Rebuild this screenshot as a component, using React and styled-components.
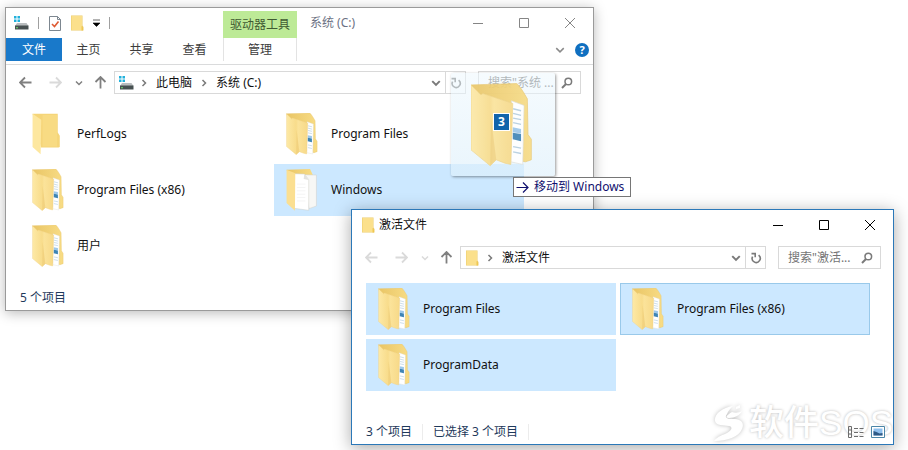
import React, { useState } from 'react'
import styled, { createGlobalStyle } from 'styled-components'

const GlobalStyle = createGlobalStyle`
	* {
		box-sizing: border-box;
	}
	body {
		margin: 0;
		background: #fff;
	}
	body, button, input {
		font-family: 'Noto Sans', 'Noto Sans CJK SC', sans-serif;
		font-size: 12px;
		line-height: 16px;
	}
	button {
		padding: 0;
		border: 0;
		background: none;
		color: inherit;
	}
	svg {
		display: block;
		flex: none;
	}
`
const Desktop = styled.main`
	position: relative;
	min-height: 100vh;
	overflow: hidden;
`
const Window = styled.section`
	position: absolute;
	display: flex;
	flex-direction: column;
	background: #fff;
	border: 1px solid ${({ $active }) => ($active ? '#2b78b8' : '#9a9a9a')};
	box-shadow: ${({ $active }) => ($active ? '0 3px 16px rgba(0,0,0,.34)' : '0 2px 12px rgba(0,0,0,.28)')};
`
const SystemWindow = styled(Window)`
	top: 7px;
	left: 5px;
	right: 314px;
`
const ActivationWindow = styled(Window)`
	top: 209px;
	left: 351px;
	right: 14px;
`
const TitleBar = styled.header`
	display: flex;
	align-items: center;
	height: 30px;
`
const QuickAccess = styled.div`
	display: flex;
	align-items: center;
	gap: 9px;
	width: 217px;
	padding-left: 7px;
`
const Divider = styled.span`
	width: 1px;
	height: 12px;
	background: #a0a0a0;
`
const ToolGroup = styled.span`
	align-self: flex-end;
	width: 74px;
	height: 27px;
	line-height: 27px;
	text-align: center;
	color: #3f5a32;
	background: #bdea97;
`
const Title = styled.h1`
	flex: 1;
	margin: 0;
	padding-left: ${({ $indent }) => $indent || 4}px;
	font-size: 12px;
	font-weight: 400;
	color: ${({ $muted }) => ($muted ? '#6b7183' : '#111')};
`
const TitleIcon = styled.span`
	padding-left: 10px;
`
const Controls = styled.div`
	display: flex;
	height: 100%;
	color: ${({ $muted }) => ($muted ? '#858585' : '#000')};
`
const ControlButton = styled.button`
	display: flex;
	align-items: center;
	justify-content: center;
	width: 46px;
`
const Ribbon = styled.nav`
	display: flex;
	align-items: center;
	height: 27px;
	padding-bottom: 3px;
	border-bottom: 1px solid #dadbdc;
`
const Tab = styled.button`
	width: 53px;
	height: 23px;
	color: #3c3c3c;
`
const FileTab = styled(Tab)`
	width: 56px;
	color: #fff;
	background: #1979ca;
`
const ToolTab = styled(Tab)`
	width: 74px;
	margin-left: 2px;
	border: solid #e3e3e3;
	border-width: 0 1px;
`
const RibbonEnd = styled.div`
	display: flex;
	align-items: center;
	gap: 10px;
	margin-left: auto;
	padding-right: 4px;
	color: #8a8a8a;
`
const HelpButton = styled.button`
	width: 14px;
	height: 14px;
	border-radius: 50%;
	background: #0f6fc0;
	color: #fff;
	font-weight: 700;
	font-size: 11px;
	line-height: 14px;
`
const NavBar = styled.div`
	display: flex;
	padding: 6px 12px 0 4px;
`
const NavButton = styled.button`
	display: flex;
	align-items: center;
	justify-content: center;
	width: ${({ $width }) => $width || 30}px;
	color: ${({ disabled }) => (disabled ? '#dadada' : '#808080')};
`
const Address = styled.div`
	display: flex;
	flex: 1;
	align-items: center;
	height: 23px;
	border: 1px solid #d9d9d9;
	color: #7a7a7a;
`
const AddressIcon = styled.span`
	display: flex;
	justify-content: center;
	width: 22px;
`
const CrumbArrow = styled.span`
	display: flex;
	justify-content: center;
	width: 14px;
`
const Crumb = styled.a`
	padding: 0 5px;
	color: #111;
	text-decoration: none;
`
const HistoryButton = styled.button`
	display: flex;
	align-items: center;
	justify-content: center;
	width: 18px;
	height: 100%;
	margin-left: auto;
`
const RefreshButton = styled.button`
	display: flex;
	align-items: center;
	justify-content: center;
	width: 20px;
	height: 100%;
	border-left: 1px solid #d9d9d9;
`
const Search = styled.label`
	display: flex;
	align-items: center;
	width: 103px;
	height: 23px;
	margin-left: 12px;
	padding: 0 7px 0 9px;
	border: 1px solid #d9d9d9;
	color: #7a7a7a;
`
const SearchInput = styled.input`
	flex: 1;
	min-width: 0;
	padding: 0;
	border: 0;
	outline: 0;
	background: none;
	&::placeholder {
		color: #757575;
		opacity: 1;
	}
`
const FileGrid = styled.ul`
	display: grid;
	grid-template-columns: repeat(auto-fill, 250px);
	gap: 4px;
	margin: 0;
	padding: 14px 14px ${({ $space }) => $space}px;
	list-style: none;
`
const FileItem = styled.button`
	display: flex;
	align-items: center;
	gap: 13px;
	width: 100%;
	height: 52px;
	padding-left: ${({ $focused }) => ($focused ? 11 : 12)}px;
	text-align: left;
	color: #111;
	background: ${({ $selected }) => ($selected ? '#cce8ff' : 'none')};
	border: ${({ $focused }) => ($focused ? '1px solid #99c9ea' : '0')};
`
const FileName = styled.span`
	font-size: 12px;
`
const StatusBar = styled.footer`
	display: flex;
	align-items: center;
	height: 24px;
	padding: 0 8px 0 14px;
	color: #1e395b;
`
const StatusText = styled.span`
	margin-right: 10px;
	padding-right: 10px;
	border-right: 1px solid ${({ $divided }) => ($divided ? '#ececec' : 'transparent')};
`
const ViewButtons = styled.div`
	position: relative;
	z-index: 1;
	display: flex;
	gap: 7px;
	margin-left: auto;
`
const DragGhost = styled.div`
	position: absolute;
	top: 73px;
	left: 451px;
	display: flex;
	align-items: center;
	justify-content: center;
	width: 104px;
	height: 103px;
	padding-right: 4px;
	border-radius: 2px;
	background: linear-gradient(rgba(236, 247, 253, .5), rgba(222, 240, 251, .65));
	box-shadow: 1px 1px 3px rgba(0, 0, 0, .4);
`
const GhostFolder = styled.div`
	opacity: .9;
`
const DragCount = styled.span`
	position: absolute;
	top: 40px;
	left: 42px;
	width: 17px;
	height: 18px;
	border: 1px solid #fff;
	background: #1264ab;
	color: #fff;
	font-weight: 700;
	line-height: 16px;
	text-align: center;
`
const DropTip = styled.div`
	position: absolute;
	top: 177px;
	left: 513px;
	display: flex;
	align-items: center;
	gap: 5px;
	height: 20px;
	padding: 0 6px 0 2px;
	border: 1px solid #767676;
	background: #fff;
	color: #10106e;
	white-space: nowrap;
`
const Watermark = styled.div`
	position: absolute;
	right: 0;
	bottom: 2px;
	display: flex;
	align-items: center;
	gap: 4px;
	height: 38px;
	color: #fff;
	font-family: 'Liberation Sans', 'Noto Sans CJK SC', sans-serif;
	font-size: 35px;
	font-weight: 500;
	line-height: 38px;
	text-shadow: 0 0 3px rgba(0, 0, 0, .28);
	svg {
		filter: drop-shadow(0 0 2px rgba(0, 0, 0, .25));
	}
`

const Chevron = ({ size = 8, d = 'M1 2.5l3 3 3-3', weight = 1.5 }) => (
	<svg width={size} height={size} viewBox="0 0 8 8" fill="none" stroke="currentColor" strokeWidth={weight}>
		<path d={d} />
	</svg>
)

const Arrow = ({ turn = 0, weight = 1.8 }) => (
	<svg width="13" height="13" viewBox="0 0 13 13" fill="none" stroke="currentColor" strokeWidth={weight}>
		<path d="M12.5 6.5h-11M6 1.5l-5 5 5 5" transform={`rotate(${turn} 6.5 6.5)`} />
	</svg>
)

const DriveIcon = () => (
	<svg width="16" height="16" viewBox="0 0 16 16">
		<path d="M1 1h2.500v2.500H1zM4.500 1H7v2.500H4.500zM1 4.500h2.500V7H1zM4.500 4.500H7V7H4.500z" fill="#22b1dc" />
		<path d="M4 8h9.500l2 3H2z" fill="#b9bdbf" />
		<path d="M2 10.500h13.500v4H2z" fill="#475051" />
		<path d="M3 12.300h2v1H3z" fill="#6fe06f" />
	</svg>
)

const SmallFolder = () => (
	<svg width="13" height="16" viewBox="0 0 13 16">
		<path d="M0 .5h11.500v10l1 1.500v3.500H0z" fill="#eccb6a" />
		<path d="M.5 1h10.500v14H.5z" fill="#fbe08c" />
		<path d="M10.500 11l1.500 1.500v3h-1.500z" fill="#efc750" />
	</svg>
)

const CheckPage = () => (
	<svg width="14" height="17" viewBox="0 0 14 17" fill="none">
		<path d="M1.500 1.500h8l3 3v11h-11z" fill="#fff" stroke="#7d8790" />
		<path d="M9.500 1.500v3h3" stroke="#7d8790" />
		<path d="M4 9l2.500 2.500 4-5" stroke="#de5a32" strokeWidth="1.600" />
	</svg>
)

const RefreshIcon = () => (
	<svg width="12" height="12" viewBox="0 0 12 12" fill="none" stroke="currentColor" strokeWidth="1.600">
		<path d="M8.600 3.200A4 4 0 1 1 2.600 4.600" />
		<path d="M1.500 1.600h3.700v3.700" />
	</svg>
)

const SearchIcon = () => (
	<svg width="12" height="12" viewBox="0 0 12 12" fill="none" stroke="currentColor">
		<circle cx="7.300" cy="4.500" r="3.300" strokeWidth="1.500" />
		<path d="M5 7L1 11" strokeWidth="2" />
	</svg>
)

const FolderIcon = ({ kind = 'full', width = 32, height = 42 }) => (
	<svg width={width} height={height} viewBox="0 0 184 250">
		<defs>
			<linearGradient id="cover" x1="0" x2="1">
				<stop offset="0" stopColor="#fde9a6" />
				<stop offset=".45" stopColor="#f8dc8b" />
				<stop offset=".55" stopColor="#fbe39a" />
				<stop offset="1" stopColor="#f7d988" />
			</linearGradient>
			<linearGradient id="back" x1="0" x2="1">
				<stop offset="0" stopColor="#e9c565" />
				<stop offset="1" stopColor="#f8dc85" />
			</linearGradient>
		</defs>
		{kind === 'empty' && (
			<>
				<path d="M0 4h150v112l12 20v66l-8 4H50z" fill="#f5d579" />
				<path d="M60 12h86v188H60z" fill="#f8db83" />
				<path d="M0 4l52 36-4 206L0 202z" fill="#fde79f" />
			</>
		)}
		{kind === 'full' && (
			<>
				<path d="M0 4L138 0q8 4 32 46l2 108 10 14v62l-18 6-100-20z" fill="url(#back)" stroke="#e6c267" strokeWidth="2" />
				<path d="M122 52l38 14-4 178-36-8z" fill="#fff" stroke="#dcdcd4" strokeWidth="2" />
				<path d="M127 76l24 6M127 90l24 6M127 104l24 5M127 118l24 5M127 190l24 5M127 206l24 5" stroke="#b5cedf" strokeWidth="4" />
				<path d="M126 132l25 5v14l-25-4z" fill="#9cc7ea" />
				<path d="M126 148l25 4v22l-25-6z" fill="#3e84b5" />
				<path d="M0 4l30 30 6-4 90 30-6 184-18-4-26-10-18 18L0 200z" fill="url(#cover)" stroke="#efd080" strokeWidth="2" />
				<path d="M60 100l-2 146 18-16z" fill="#eac469" opacity=".5" />
			</>
		)}
		{kind === 'pages' && (
			<>
				<path d="M0 4L140 0l16 34v60L50 120z" fill="url(#back)" />
				<path d="M90 34l88 2v184l-44 16z" fill="#f7f7f5" stroke="#cfcfca" strokeWidth="3" />
				<path d="M44 28l62 2 26 34v182l-88-12z" fill="#fff" stroke="#cfcfca" strokeWidth="3" />
				<path d="M106 30l-4 30 30 6z" fill="#e3e3e0" />
				<path d="M62 90h50M62 110h50M62 130h50M62 150h50M62 170h50M62 190h50" stroke="#eee" strokeWidth="4" />
				<path d="M0 4l52 22-2 222L0 202z" fill="#fbdf91" />
			</>
		)}
	</svg>
)

const WindowControls = ({ muted }) => (
	<Controls $muted={muted}>
		<ControlButton aria-label="最小化">
			<svg width="10" height="10" stroke="currentColor"><path d="M0 5.500h10" /></svg>
		</ControlButton>
		<ControlButton aria-label="最大化">
			<svg width="10" height="10" fill="none" stroke="currentColor"><path d="M.5.500h9v9h-9z" /></svg>
		</ControlButton>
		<ControlButton aria-label="关闭">
			<svg width="10" height="10" stroke="currentColor"><path d="M0 0l10 10M10 0L0 10" /></svg>
		</ControlButton>
	</Controls>
)

const Navigation = ({ icon, path, placeholder, canGoBack }) => (
	<NavBar>
		<NavButton aria-label="后退" disabled={!canGoBack}><Arrow /></NavButton>
		<NavButton aria-label="前进" disabled><Arrow turn={180} /></NavButton>
		<NavButton aria-label="最近" $width={17} disabled={!canGoBack}><Chevron /></NavButton>
		<NavButton aria-label="向上" $width={27}><Arrow turn={90} /></NavButton>
		<Address>
			<AddressIcon>{icon}</AddressIcon>
			{path.map(part => (
				<React.Fragment key={part}>
					<CrumbArrow><Chevron d="M2.500 1l3 3-3 3" /></CrumbArrow>
					<Crumb href="#">{part}</Crumb>
				</React.Fragment>
			))}
			<HistoryButton aria-label="历史"><Chevron size={10} weight={1.6} /></HistoryButton>
			<RefreshButton aria-label="刷新"><RefreshIcon /></RefreshButton>
		</Address>
		<Search>
			<SearchInput type="text" aria-label="搜索" placeholder={placeholder} />
			<SearchIcon />
		</Search>
	</NavBar>
)

const Files = ({ files, initial, focused, space }) => {
	const [selected, setSelected] = useState(initial)

	const toggle = (name) => {
		setSelected(selected.includes(name) ? selected.filter(item => item !== name) : [...selected, name])
	}

	return (
		<FileGrid $space={space}>
			{files.map(({ name, kind }) => (
				<li key={name}>
					<FileItem
						onClick={() => toggle(name)}
						$selected={selected.includes(name)}
						$focused={focused === name}
					>
						<FolderIcon kind={kind} />
						<FileName>{name}</FileName>
					</FileItem>
				</li>
			))}
		</FileGrid>
	)
}

const systemFiles = [
	{ name: 'PerfLogs', kind: 'empty' },
	{ name: 'Program Files' },
	{ name: 'Program Files (x86)' },
	{ name: 'Windows', kind: 'pages' },
	{ name: '用户' },
]
const activationFiles = [
	{ name: 'Program Files' },
	{ name: 'Program Files (x86)' },
	{ name: 'ProgramData' },
]

const App = () => (
	<Desktop>
		<GlobalStyle />
		<SystemWindow>
			<TitleBar>
				<QuickAccess>
					<DriveIcon />
					<Divider />
					<CheckPage />
					<SmallFolder />
					<svg width="7" height="8" viewBox="0 0 7 8"><path d="M0 1h7M0 4h7L3.500 7.500z" stroke="#000" strokeWidth=".6" /></svg>
					<Divider />
				</QuickAccess>
				<ToolGroup>驱动器工具</ToolGroup>
				<Title $muted $indent={13}>系统 (C:)</Title>
				<WindowControls muted />
			</TitleBar>
			<Ribbon>
				<FileTab>文件</FileTab>
				<Tab>主页</Tab>
				<Tab>共享</Tab>
				<Tab>查看</Tab>
				<ToolTab>管理</ToolTab>
				<RibbonEnd>
					<Chevron size={10} weight={1.2} />
					<HelpButton aria-label="帮助">?</HelpButton>
				</RibbonEnd>
			</Ribbon>
			<Navigation canGoBack icon={<DriveIcon />} path={['此电脑', '系统 (C:)']} placeholder={'搜索"系统 ...'} />
			<Files files={systemFiles} initial={['Windows']} space={14} />
			<StatusBar>
				<StatusText>5 个项目</StatusText>
			</StatusBar>
		</SystemWindow>

		<DragGhost>
			<GhostFolder><FolderIcon width={61} height={84} /></GhostFolder>
			<DragCount>3</DragCount>
		</DragGhost>

		<ActivationWindow $active>
			<TitleBar>
				<TitleIcon><SmallFolder /></TitleIcon>
				<Title>激活文件</Title>
				<WindowControls />
			</TitleBar>
			<Navigation icon={<SmallFolder />} path={['激活文件']} placeholder={'搜索"激活...'} />
			<Files
				files={activationFiles}
				initial={['Program Files', 'Program Files (x86)', 'ProgramData']}
				focused="Program Files (x86)"
				space={29}
			/>
			<StatusBar>
				<StatusText $divided>3 个项目</StatusText>
				<StatusText $divided>已选择 3 个项目</StatusText>
				<ViewButtons>
					<button aria-label="详细信息">
						<svg width="16" height="12" viewBox="0 0 16 12" fill="none" stroke="#6d6d6d">
							<path d="M.5.500h3v11h-3zM.5 4h3M.5 8h3" />
							<path d="M6 2.500h4M11.500 2.500h4M6 6.500h4M11.500 6.500h4M6 10.500h4M11.500 10.500h4" />
						</svg>
					</button>
					<button aria-label="大图标">
						<svg width="14" height="12" viewBox="0 0 14 12">
							<path d="M.5.500h13v11H.5z" fill="#fff" stroke="#4b86a8" />
							<path d="M2.500 2.500h9v7h-9z" fill="#8fc0ee" />
							<path d="M2.500 5l3 1 3 1.500 3-.5v2.500h-9z" fill="#2e5a86" />
						</svg>
					</button>
				</ViewButtons>
			</StatusBar>
			<Watermark>
				<svg width="32" height="38" viewBox="0 0 32 38" fill="#fff">
					<path d="M20 2C9 4 1 10 2 17c1 5 9 4 14 5 4 1 3 4-2 7-4 2-9 3-13 8 13 0 25-4 28-12 3-7-2-10-9-10-6 0-9-1-6-5 1-3 3-5 6-8z" />
					<path d="M19 8c-5 3-8 6-3 6 6 0 11-3 13-7-3 2-7 2-10 1zM23 3l4-2v3l-4 1z" />
				</svg>
				<span>软件SOS</span>
			</Watermark>
		</ActivationWindow>

		<DropTip>
			<Arrow turn={180} weight={1.2} />
			移动到 Windows
		</DropTip>
	</Desktop>
)

export default App
